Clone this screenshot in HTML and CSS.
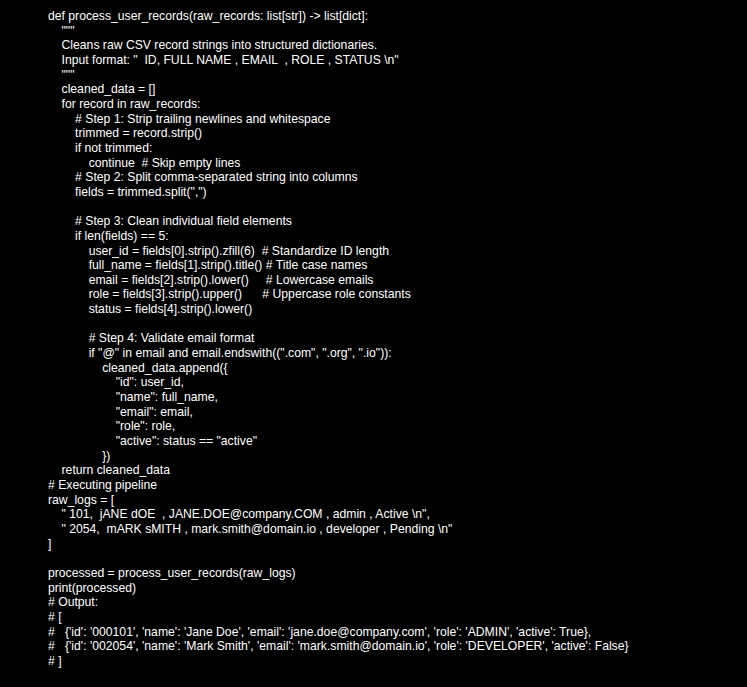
FILE: index.html
```html
<!DOCTYPE html>
<html>
<head>
<meta charset="utf-8">
<link rel="stylesheet" href="styles.css">
</head>
<body>
<pre class="code">def process_user_records(raw_records: list[str]) -> list[dict]:
    """
    Cleans raw CSV record strings into structured dictionaries.
    Input format: "  ID, FULL NAME , EMAIL  , ROLE , STATUS \n"
    """
    cleaned_data = []
    for record in raw_records:
        # Step 1: Strip trailing newlines and whitespace
        trimmed = record.strip()
        if not trimmed:
            continue  # Skip empty lines
        # Step 2: Split comma-separated string into columns
        fields = trimmed.split(",")

        # Step 3: Clean individual field elements
        if len(fields) == 5:
            user_id = fields[0].strip().zfill(6)  # Standardize ID length
            full_name = fields[1].strip().title() # Title case names
            email = fields[2].strip().lower()     # Lowercase emails
            role = fields[3].strip().upper()      # Uppercase role constants
            status = fields[4].strip().lower()

            # Step 4: Validate email format
            if "@" in email and email.endswith((".com", ".org", ".io")):
                cleaned_data.append({
                    "id": user_id,
                    "name": full_name,
                    "email": email,
                    "role": role,
                    "active": status == "active"
                })
    return cleaned_data
# Executing pipeline
raw_logs = [
    " 101,  jANE dOE  , JANE.DOE@company.COM , admin , Active \n",
    " 2054,  mARK sMITH , mark.smith@domain.io , developer , Pending \n"
]

processed = process_user_records(raw_logs)
print(processed)
# Output:
# [
#   {'id': '000101', 'name': 'Jane Doe', 'email': 'jane.doe@company.com', 'role': 'ADMIN', 'active': True},
#   {'id': '002054', 'name': 'Mark Smith', 'email': 'mark.smith@domain.io', 'role': 'DEVELOPER', 'active': False}
# ]</pre>
</body>
</html>
```
FILE: styles.css
```css
html, body {
  margin: 0;
  background: #000;
}
.code {
  margin: 0;
  padding: 9px 0 0 48px;
  color: #fff;
  font-family: "Liberation Sans", Arial, sans-serif;
  font-size: 12.2px;
  line-height: 14.65px;
  white-space: pre;
}
```
